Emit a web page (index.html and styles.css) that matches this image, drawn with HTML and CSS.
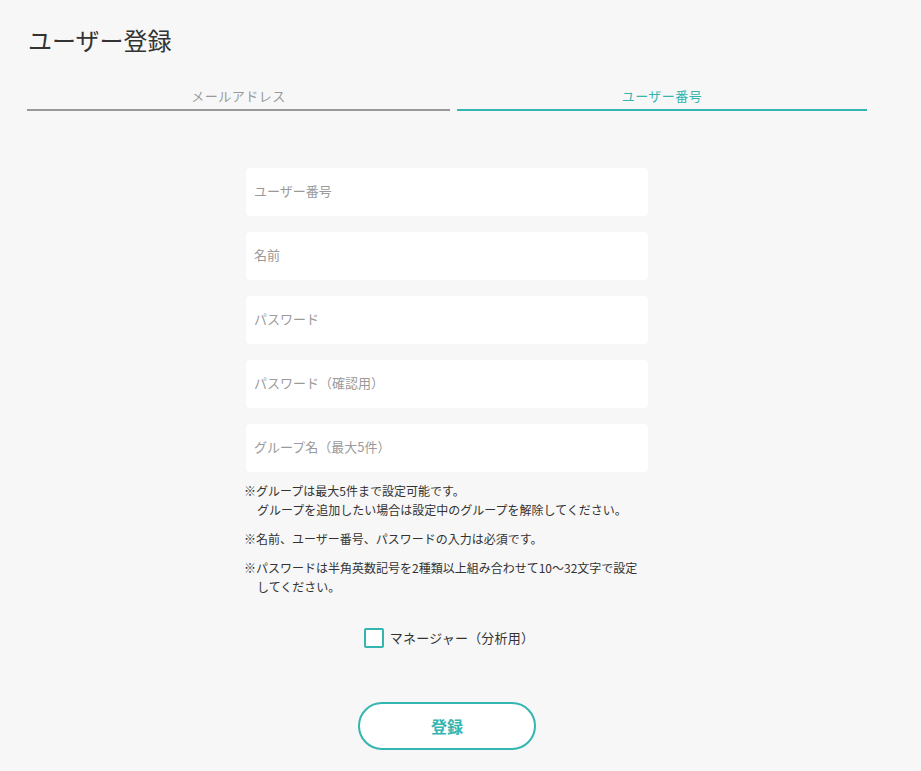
FILE: index.html
```html
<!DOCTYPE html>
<html lang="ja">
<head>
  <meta charset="UTF-8">
  <meta name="viewport" content="width=device-width, initial-scale=1.0">
  <title>ユーザー登録</title>
  <link rel="stylesheet" href="styles.css">
</head>
<body>
  <div class="page">
    <h1 class="title">ユーザー登録</h1>

    <div class="tabs">
      <div class="tab">メールアドレス</div>
      <div class="tab active">ユーザー番号</div>
    </div>

    <form class="form" onsubmit="return false">
      <input class="field" type="text" placeholder="ユーザー番号">
      <input class="field" type="text" placeholder="名前">
      <input class="field" type="password" placeholder="パスワード">
      <input class="field" type="password" placeholder="パスワード（確認用）">
      <input class="field" type="text" placeholder="グループ名（最大5件）">

      <div class="notes">
        <p>※グループは最大5件まで設定可能です。<br><span class="indent">グループを追加したい場合は設定中のグループを解除してください。</span></p>
        <p>※名前、ユーザー番号、パスワードの入力は必須です。</p>
        <p>※パスワードは半角英数記号を2種類以上組み合わせて10〜32文字で設定<br><span class="indent">してください。</span></p>
      </div>

      <label class="check">
        <input type="checkbox">
        <span class="box"></span>
        <span>マネージャー（分析用）</span>
      </label>

      <div class="actions">
        <button class="submit" type="submit">登録</button>
      </div>
    </form>
  </div>
</body>
</html>
```

FILE: styles.css
```css
body {
  margin: 0;
  background: #f7f7f7;
  color: #333;
  font-family: "Noto Sans CJK JP", "Noto Sans", sans-serif;
}
.page {
  width: 840px;
  padding: 24px 0 0 27px;
}
.title {
  margin: 0 0 0 1px;
  font-size: 24px;
  font-weight: 400;
  line-height: 32px;
  color: #333;
}
.tabs {
  display: grid;
  grid-template-columns: 423px 410px;
  column-gap: 7px;
  margin-top: 30px;
}
.tab {
  text-align: center;
  font-size: 13px;
  line-height: 20px;
  letter-spacing: 0.5px;
  color: #999;
  padding-bottom: 3px;
  border-bottom: 2px solid #999;
}
.tab.active {
  color: #33b5b0;
  border-bottom-color: #33b5b0;
}
.form {
  width: 402px;
  margin: 57px auto 0;
}
.field {
  display: block;
  box-sizing: border-box;
  width: 100%;
  height: 48px;
  margin-bottom: 16px;
  padding: 0 8px 3px;
  border: none;
  border-radius: 4px;
  background: #fff;
  font-family: inherit;
  font-size: 13px;
  color: #333;
  outline: none;
}
.field::placeholder {
  color: #9a9a9a;
}
.field:last-of-type {
  margin-bottom: 9px;
}
.notes {
  margin-left: -2px;
  font-size: 12px;
  line-height: 19px;
  color: #333;
}
.notes p {
  margin: 0 0 10px;
}
.indent {
  padding-left: 13px;
}
.check {
  display: flex;
  align-items: center;
  justify-content: center;
  gap: 6px;
  margin-top: 32px;
  padding-left: 4px;
  font-size: 13px;
  line-height: 20px;
  letter-spacing: 0.2px;
  cursor: pointer;
}
.check input {
  display: none;
}
.box {
  box-sizing: border-box;
  width: 20px;
  height: 20px;
  border: 2px solid #33b5b0;
  border-radius: 2px;
  background: #fff;
}
.check input:checked + .box {
  background: #33b5b0;
}
.actions {
  display: flex;
  justify-content: center;
  margin-top: 54px;
}
.submit {
  width: 178px;
  height: 48px;
  border: 2px solid #33b5b0;
  border-radius: 24px;
  background: #fff;
  color: #33b5b0;
  font-family: inherit;
  font-size: 16px;
  font-weight: 700;
  cursor: pointer;
}
```
